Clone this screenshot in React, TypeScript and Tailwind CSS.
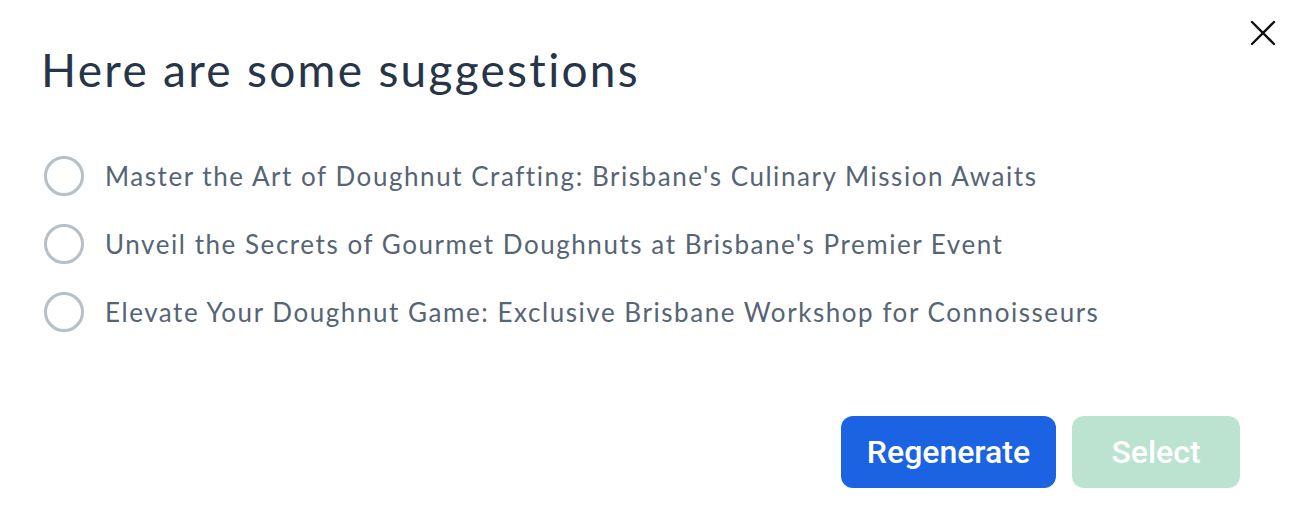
import React, { useState } from "react";

const suggestions = [
  "Master the Art of Doughnut Crafting: Brisbane's Culinary Mission Awaits",
  "Unveil the Secrets of Gourmet Doughnuts at Brisbane's Premier Event",
  "Elevate Your Doughnut Game: Exclusive Brisbane Workshop for Connoisseurs",
];

export default function App() {
  const [picked, setPicked] = useState<number | null>(null);

  return (
    <div className="relative w-[1294px] h-[516px] bg-white overflow-hidden" style={{ fontFamily: "Lato, 'Noto Sans', sans-serif" }}>
      <button className="absolute right-[16px] top-[18px] w-[30px] h-[30px] flex items-center justify-center" aria-label="Close">
        <svg width="28" height="28" viewBox="0 0 28 28" fill="none" stroke="#111" strokeWidth="2.4" strokeLinecap="round">
          <path d="M3 3 L25 25 M25 3 L3 25" />
        </svg>
      </button>

      <div className="flex flex-col pl-[41px] pr-[54px] pt-[43px]">
        <h1 className="text-[46px] leading-[54px] text-[#263548] font-normal tracking-[2.3px]">Here are some suggestions</h1>

        <ul className="flex flex-col mt-[45px] pl-[3px]">
          {suggestions.map((s, i) => (
            <li key={i} className="flex items-center h-[68px] cursor-pointer" onClick={() => setPicked(i)}>
              <span className="w-[40px] h-[40px] rounded-full border-[3px] border-[#b6bec6] flex items-center justify-center shrink-0">
                {picked === i && <span className="w-[18px] h-[18px] rounded-full bg-[#1c63e3]" />}
              </span>
              <span className="ml-[21px] text-[26px] text-[#566474] tracking-[1.55px]">{s}</span>
            </li>
          ))}
        </ul>

        <div className="flex justify-end gap-[16px] mt-[70px]">
          <button className="w-[215px] h-[72px] rounded-[12px] bg-[#1c63e3] text-white text-[32px] font-medium" style={{ fontFamily: "Roboto, sans-serif" }}>
            Regenerate
          </button>
          <button className="w-[168px] h-[72px] rounded-[12px] bg-[#bce3cf] text-white text-[32px] font-medium" style={{ fontFamily: "Roboto, sans-serif" }} disabled>
            Select
          </button>
        </div>
      </div>
    </div>
  );
}
